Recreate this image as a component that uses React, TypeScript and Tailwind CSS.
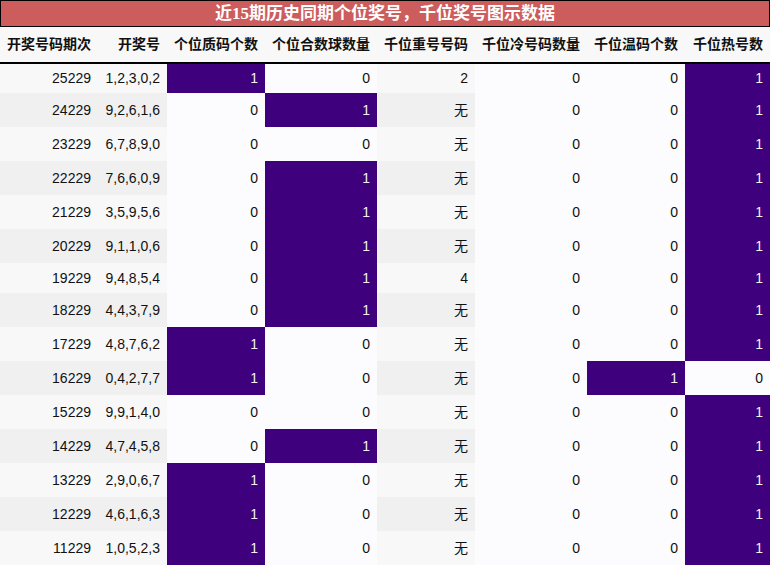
type Row = {
  qi: string;
  hao: string;
  zhi: number;
  he: number;
  chong: string;
  leng: number;
  wen: number;
  re: number;
};

const rows: Row[] = [
  { qi: "25229", hao: "1,2,3,0,2", zhi: 1, he: 0, chong: "2", leng: 0, wen: 0, re: 1 },
  { qi: "24229", hao: "9,2,6,1,6", zhi: 0, he: 1, chong: "无", leng: 0, wen: 0, re: 1 },
  { qi: "23229", hao: "6,7,8,9,0", zhi: 0, he: 0, chong: "无", leng: 0, wen: 0, re: 1 },
  { qi: "22229", hao: "7,6,6,0,9", zhi: 0, he: 1, chong: "无", leng: 0, wen: 0, re: 1 },
  { qi: "21229", hao: "3,5,9,5,6", zhi: 0, he: 1, chong: "无", leng: 0, wen: 0, re: 1 },
  { qi: "20229", hao: "9,1,1,0,6", zhi: 0, he: 1, chong: "无", leng: 0, wen: 0, re: 1 },
  { qi: "19229", hao: "9,4,8,5,4", zhi: 0, he: 1, chong: "4", leng: 0, wen: 0, re: 1 },
  { qi: "18229", hao: "4,4,3,7,9", zhi: 0, he: 1, chong: "无", leng: 0, wen: 0, re: 1 },
  { qi: "17229", hao: "4,8,7,6,2", zhi: 1, he: 0, chong: "无", leng: 0, wen: 0, re: 1 },
  { qi: "16229", hao: "0,4,2,7,7", zhi: 1, he: 0, chong: "无", leng: 0, wen: 1, re: 0 },
  { qi: "15229", hao: "9,9,1,4,0", zhi: 0, he: 0, chong: "无", leng: 0, wen: 0, re: 1 },
  { qi: "14229", hao: "4,7,4,5,8", zhi: 0, he: 1, chong: "无", leng: 0, wen: 0, re: 1 },
  { qi: "13229", hao: "2,9,0,6,7", zhi: 1, he: 0, chong: "无", leng: 0, wen: 0, re: 1 },
  { qi: "12229", hao: "4,6,1,6,3", zhi: 1, he: 0, chong: "无", leng: 0, wen: 0, re: 1 },
  { qi: "11229", hao: "1,0,5,2,3", zhi: 1, he: 0, chong: "无", leng: 0, wen: 0, re: 1 },
];

const headers = [
  { label: "开奖号码期次", w: "w-[98px]" },
  { label: "开奖号", w: "w-[69px]" },
  { label: "个位质码个数", w: "w-[98px]" },
  { label: "个位合数球数量", w: "w-[112px]" },
  { label: "千位重号号码", w: "w-[98px]" },
  { label: "千位冷号码数量", w: "w-[112px]" },
  { label: "千位温码个数", w: "w-[98px]" },
  { label: "千位热号数", w: "w-[85px]" },
];

function Heat({ v }: { v: number }) {
  return (
    <td
      className={
        v === 1
          ? "bg-[#3f007d] text-[#f1f1f1] text-right pr-[7px]"
          : "bg-[#fcfbfd] text-[#111] text-right pr-[7px]"
      }
    >
      {v}
    </td>
  );
}

export default function App() {
  return (
    <div
      className="w-[770px] h-[566px] overflow-hidden bg-white"
      style={{ fontFamily: '"Liberation Sans", "Noto Sans CJK SC", sans-serif' }}
    >
      <div
        className="h-[27px] bg-[#cd5c5c] border border-black flex items-center justify-center text-white font-bold text-[17px] leading-none"
        style={{ fontFamily: '"Liberation Serif", "Noto Sans CJK SC", serif' }}
      >
        近15期历史同期个位奖号，千位奖号图示数据
      </div>
      <table className="table-fixed border-collapse w-[770px] text-[14px] text-[#111]">
        <thead>
          <tr className="h-[36px] bg-[#f8f8f8] border-b-2 border-black">
            {headers.map((h) => (
              <th key={h.label} className={`${h.w} text-right pr-[7px] font-bold whitespace-nowrap`}>
                {h.label}
              </th>
            ))}
          </tr>
        </thead>
        <tbody>
          {rows.map((r, i) => {
            const strip = i % 2 === 0 ? "bg-[#f8f8f8]" : "bg-[#f0f0f0]";
            const h = r.chong === "无" ? "h-[34px]" : "h-[30px]";
            return (
              <tr key={r.qi} className={h}>
                <td className={`${strip} text-right pr-[7px]`}>{r.qi}</td>
                <td className={`${strip} text-right pr-[7px]`}>{r.hao}</td>
                <Heat v={r.zhi} />
                <Heat v={r.he} />
                <td className={`${strip} text-right pr-[7px]`}>{r.chong}</td>
                <Heat v={r.leng} />
                <Heat v={r.wen} />
                <Heat v={r.re} />
              </tr>
            );
          })}
        </tbody>
      </table>
    </div>
  );
}
